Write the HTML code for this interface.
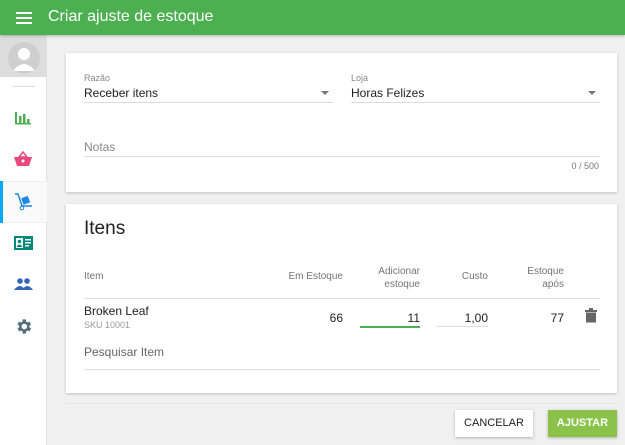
<!DOCTYPE html>
<html><head><meta charset="utf-8"><style>
*{box-sizing:border-box;margin:0;padding:0}
body{width:625px;height:445px;overflow:hidden;background:#f0f0f0;font-family:"Liberation Sans",sans-serif;position:relative;color:#212121}
.top{position:absolute;left:0;top:0;width:625px;height:35px;background:#4caf50;box-shadow:0 1px 3px rgba(0,0,0,.25);z-index:2}
.top .t{position:absolute;left:48px;top:8px;color:#fff;font-size:16px}
.side{position:absolute;left:0;top:35px;width:47px;height:410px;background:#fff;border-right:1px solid #e0e0e0}
.ico{position:absolute;left:14px}
.card{position:absolute;left:66px;width:551px;background:#fff;box-shadow:0 1px 3px rgba(0,0,0,.2)}
.a{position:absolute;font-size:12px}
.lbl{font-size:9px;color:#888}
.line{position:absolute;height:1px;background:#ddd}
.g{color:#757575;font-size:10px}
.btn{position:absolute;top:410px;height:27px;font-size:11px;font-weight:bold;text-align:center;line-height:27px;box-shadow:0 1px 3px rgba(0,0,0,.25)}
</style></head><body>
<div class="top">
<svg style="position:absolute;left:16px;top:12px" width="16" height="12"><rect y="0" width="16" height="2" fill="#fff"/><rect y="5" width="16" height="2" fill="#fff"/><rect y="10" width="16" height="2" fill="#fff"/></svg>
<div class="t">Criar ajuste de estoque</div></div>
<div class="side">
<div style="position:absolute;left:0;top:0;width:47px;height:42px;background:#ddd;overflow:hidden">
<svg width="47" height="42"><circle cx="24" cy="23" r="16" fill="#cfcfcf"/><circle cx="24" cy="19" r="6" fill="#fff"/><path d="M13 36 Q24 22 35 36Z" fill="#fff"/></svg></div>
<div style="position:absolute;left:12px;top:51px;width:23px;height:1px;background:#ddd"></div>
<svg class="ico" style="top:75px" width="18" height="16"><rect x="1" y="2" width="2" height="12" fill="#4caf50"/><rect x="5" y="6" width="2.5" height="8" fill="#4caf50"/><rect x="9" y="4" width="2.5" height="10" fill="#4caf50"/><rect x="13" y="9" width="2.5" height="5" fill="#4caf50"/><rect x="1" y="13" width="16" height="1.5" fill="#4caf50"/></svg>
<svg class="ico" style="top:116px" width="18" height="16"><path d="M5 6 L9 1 L13 6Z" fill="none" stroke="#e84a7f" stroke-width="1.5"/><path d="M0 6 H18 L15 15 H3Z" fill="#e84a7f"/><circle cx="9" cy="10" r="1.5" fill="#fff"/></svg>
<div style="position:absolute;left:0;top:146px;width:47px;height:42px;background:#fafafa;border-top:1px solid #eee;border-bottom:1px solid #eee"></div>
<div style="position:absolute;left:0;top:146px;width:3px;height:42px;background:#03a9f4"></div>
<svg class="ico" style="top:157px" width="20" height="20"><path d="M1 2 H4 L8 14 H18" fill="none" stroke="#1e88e5" stroke-width="1.5"/><rect x="8" y="5" width="7" height="7" fill="#1e88e5" transform="rotate(-20 11 8)"/><circle cx="8" cy="16" r="1.8" fill="none" stroke="#1e88e5"/></svg>
<svg class="ico" style="top:201px" width="19" height="14"><rect width="19" height="14" fill="#00897b"/><rect x="2" y="2" width="7" height="10" fill="#fff"/><circle cx="5.5" cy="5.5" r="1.8" fill="#00897b"/><path d="M2.5 11 Q5.5 6 8.5 11Z" fill="#00897b"/><rect x="11" y="3" width="6" height="1.5" fill="#fff"/><rect x="11" y="6" width="6" height="1.5" fill="#fff"/><rect x="11" y="9" width="4" height="1.5" fill="#fff"/></svg>
<svg class="ico" style="top:243px" width="19" height="12"><circle cx="6" cy="3" r="2.8" fill="#3565b8"/><circle cx="13" cy="3" r="2.8" fill="#3565b8"/><path d="M0 12 Q6 4 11 12Z M8 12 Q13 4 19 12Z" fill="#3565b8"/></svg>
<svg class="ico" style="top:282px;left:14px" width="19" height="19" viewBox="0 0 24 24"><path fill="#546e7a" d="M19.4 13a7.5 7.5 0 0 0 0-2l2.1-1.6-2-3.5-2.5 1a7 7 0 0 0-1.7-1L15 3h-4l-.4 2.9a7 7 0 0 0-1.7 1l-2.5-1-2 3.5L6.6 11a7.5 7.5 0 0 0 0 2l-2.1 1.6 2 3.5 2.5-1a7 7 0 0 0 1.7 1L11 21h4l.4-2.9a7 7 0 0 0 1.7-1l2.5 1 2-3.5zM13 15.5a3.5 3.5 0 1 1 0-7 3.5 3.5 0 0 1 0 7z"/></svg>
</div>

<div class="card" style="top:53px;height:139px">
<div class="a lbl" style="left:18px;top:20px">Razão</div>
<div class="a" style="left:18px;top:33px">Receber itens</div>
<svg class="a" style="left:255px;top:38px" width="8" height="4"><path d="M0 0H8L4 4Z" fill="#777"/></svg>
<div class="line" style="left:18px;top:49px;width:249px"></div>
<div class="a lbl" style="left:285px;top:20px">Loja</div>
<div class="a" style="left:285px;top:33px">Horas Felizes</div>
<svg class="a" style="left:522px;top:38px" width="8" height="4"><path d="M0 0H8L4 4Z" fill="#777"/></svg>
<div class="line" style="left:285px;top:49px;width:249px"></div>
<div class="a" style="left:18px;top:87px;color:#888">Notas</div>
<div class="line" style="left:18px;top:103px;width:516px"></div>
<div class="a" style="left:490px;top:108px;font-size:9px;color:#777;width:43px;text-align:right">0 / 500</div>
</div>

<div class="card" style="top:204px;height:189px">
<div class="a" style="left:18px;top:14px;font-size:19px">Itens</div>
<div class="a g" style="left:18px;top:67px">Item</div>
<div class="a g" style="left:200px;top:67px;width:77px;text-align:right">Em Estoque</div>
<div class="a g" style="left:280px;top:61px;width:74px;text-align:right;line-height:13px">Adicionar<br>estoque</div>
<div class="a g" style="left:360px;top:67px;width:62px;text-align:right">Custo</div>
<div class="a g" style="left:430px;top:61px;width:68px;text-align:right;line-height:13px">Estoque<br>após</div>
<div class="line" style="left:18px;top:94px;width:516px"></div>
<div class="a" style="left:18px;top:100px">Broken Leaf</div>
<div class="a" style="left:18px;top:116px;font-size:9px;color:#999">SKU 10001</div>
<div class="a" style="left:200px;top:107px;width:77px;text-align:right">66</div>
<div class="a" style="left:294px;top:107px;width:60px;text-align:right">11</div>
<div style="position:absolute;left:294px;top:122px;width:60px;height:2px;background:#4caf50"></div>
<div class="a" style="left:370px;top:107px;width:52px;text-align:right">1,00</div>
<div class="line" style="left:370px;top:122px;width:52px"></div>
<div class="a" style="left:440px;top:107px;width:58px;text-align:right">77</div>
<svg class="a" style="left:519px;top:104px" width="12" height="15"><rect x="0" y="2" width="12" height="2" fill="#666"/><rect x="4" y="0" width="4" height="2" fill="#666"/><rect x="1" y="4.5" width="10" height="10" fill="#666"/></svg>
<div class="a" style="left:18px;top:141px;color:#666">Pesquisar Item</div>
<div class="line" style="left:18px;top:165px;width:516px"></div>
</div>
<div class="line" style="left:66px;top:403px;width:551px;background:#e3e3e3"></div>
<div class="btn" style="left:455px;width:78px;background:#fff;color:#212121;font-weight:normal">CANCELAR</div>
<div class="btn" style="left:548px;width:69px;background:#8bc34a;color:#fff">AJUSTAR</div>
</body></html>
